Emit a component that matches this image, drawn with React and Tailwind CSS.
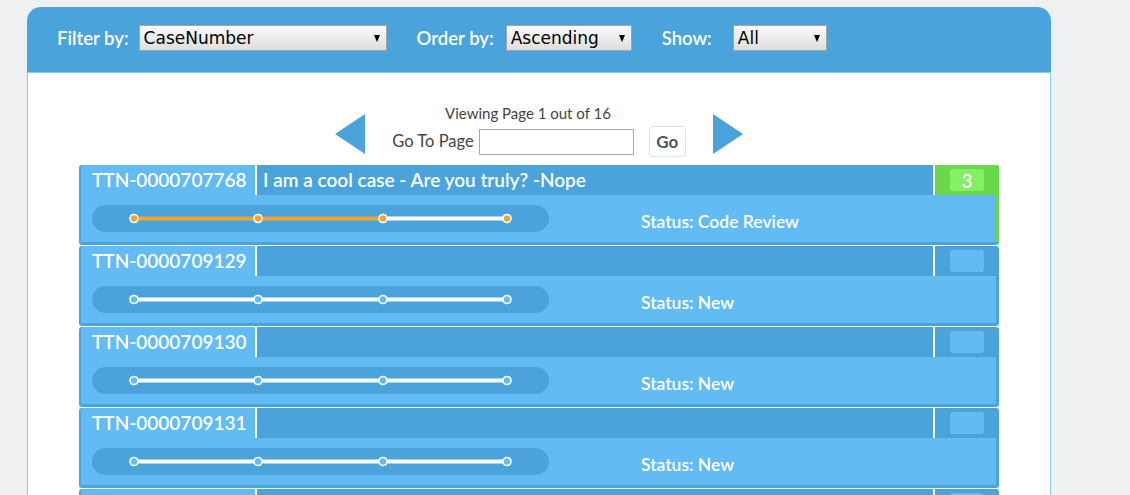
import React from "react";

const FONT = { fontFamily: "Lato, 'Open Sans', sans-serif" };
const SEL = { fontFamily: "'DejaVu Sans', sans-serif" };

function FakeSelect({ value, width }) {
  return (
    <div
      className={`relative flex h-[26px] items-center border border-[#a3a3a3] bg-gradient-to-b from-[#fafafa] to-[#dedede] pl-[4px] text-[17px] font-normal leading-none text-black ${width}`}
      style={SEL}
    >
      <span>{value}</span>
      <span className="absolute right-[6px] top-[9px] h-0 w-0 border-x-[3.5px] border-t-[7px] border-x-transparent border-t-black" />
    </div>
  );
}

function Progress({ done }) {
  const xs = [42, 166, 291, 415];
  const orange = "#f6a431";
  return (
    <div className="h-[27px] w-[457px] rounded-full bg-[#4aa3da]">
      <svg width="457" height="27" viewBox="0 0 457 27">
        {xs.slice(0, 3).map((x, i) => (
          <line
            key={i}
            x1={x}
            y1="13.5"
            x2={xs[i + 1]}
            y2="13.5"
            stroke={i < done - 1 ? orange : "#ffffff"}
            strokeWidth="4"
          />
        ))}
        {xs.map((x, i) => (
          <circle
            key={i}
            cx={x}
            cy="13.5"
            r="4"
            fill={done > 0 ? orange : "#62bbf3"}
            stroke="#ffffff"
            strokeWidth="1.6"
          />
        ))}
      </svg>
    </div>
  );
}

function Row({ id, title, status, badge, done }) {
  const green = badge != null;
  return (
    <div className="flex h-[80px] w-[920px] shrink-0 flex-col overflow-hidden rounded-[3px] bg-[#4aa3da] pl-[2px]">
      <div className="flex h-[30px] shrink-0">
        <div className="flex w-[174px] items-center rounded-tl-[3px] bg-[#62bbf3] pl-[11px] text-[19px] font-semibold text-white">
          {id}
        </div>
        <div className="w-[2px] bg-white" />
        <div className="flex flex-1 items-center pl-[6px] text-[19px] font-semibold text-white">
          {title}
        </div>
        <div className="w-[2px] bg-white" />
        <div
          className={`flex w-[64px] items-center justify-center ${
            green ? "bg-[#6ad84b]" : ""
          }`}
        >
          <div
            className={`flex h-[22px] w-[34px] items-center justify-center rounded-[3px] text-[19px] font-semibold leading-none text-white ${
              green ? "bg-[#86ee66]" : "bg-[#62bbf3]"
            }`}
          >
            {badge}
          </div>
        </div>
      </div>
      <div className="flex h-[47px] shrink-0">
        <div className="flex flex-1 items-center bg-[#62bbf3] pl-[11px]">
          <Progress done={done} />
          <div className="ml-[92px] mt-[8px] text-[17.5px] font-semibold text-white">{status}</div>
        </div>
        <div className={`w-[3px] ${green ? "bg-[#6ad84b]" : ""}`} />
      </div>
    </div>
  );
}

export default function App() {
  const rows = [
    { id: "TTN-0000707768", title: "I am a cool case - Are you truly? -Nope", status: "Status: Code Review", badge: "3", done: 3 },
    { id: "TTN-0000709129", title: "", status: "Status: New", done: 0 },
    { id: "TTN-0000709130", title: "", status: "Status: New", done: 0 },
    { id: "TTN-0000709131", title: "", status: "Status: New", done: 0 },
    { id: "TTN-0000709132", title: "", status: "Status: New", done: 0 },
  ];
  return (
    <div className="h-[495px] overflow-hidden bg-[#eff0f2] pt-[7px]" style={FONT}>
      <div className="ml-[27px] w-[1024px]">
        <div className="flex h-[66px] items-start rounded-t-[14px] border-b border-[#8ccbea] bg-[#4aa3da] pl-[30px] pt-[18px] text-[18.5px] font-semibold text-white">
          <span className="mr-[10px]">Filter by:</span>
          <FakeSelect value="CaseNumber" width="w-[248px]" />
          <span className="ml-[30px] mr-[12px]">Order by:</span>
          <FakeSelect value="Ascending" width="w-[126px]" />
          <span className="ml-[30px] mr-[21px]">Show:</span>
          <FakeSelect value="All" width="w-[94px]" />
        </div>
        <div className="h-[430px] border-x border-[#8ccbea] bg-white">
          <div className="flex items-center justify-center pt-[30px] pb-[8px]">
            <div className="mt-[7px] h-0 w-0 border-y-[20px] border-r-[30px] border-y-transparent border-r-[#4aa3da]" />
            <div className="mx-[27px] flex flex-col text-[#444]">
              <div className="h-[20px] pr-[22px] text-center text-[15px] leading-[20px]">Viewing Page 1 out of 16</div>
              <div className="mt-[3px] flex h-[31px] items-center">
                <span className="text-[16.5px]">Go To Page</span>
                <div className="ml-[5px] h-[26px] w-[155px] border border-[#a9a9a9] bg-white" />
                <div className="ml-[15px] flex h-[31px] w-[37px] items-center justify-center rounded-[4px] border border-[#dde3ea] bg-white text-[17px] font-bold text-[#4a5866]">
                  Go
                </div>
              </div>
            </div>
            <div className="mt-[7px] h-0 w-0 border-y-[20px] border-l-[30px] border-y-transparent border-l-[#4aa3da]" />
          </div>
          <div className="flex flex-col items-center gap-[1px]">
            {rows.map((r) => (
              <Row key={r.id} {...r} />
            ))}
          </div>
        </div>
      </div>
    </div>
  );
}
